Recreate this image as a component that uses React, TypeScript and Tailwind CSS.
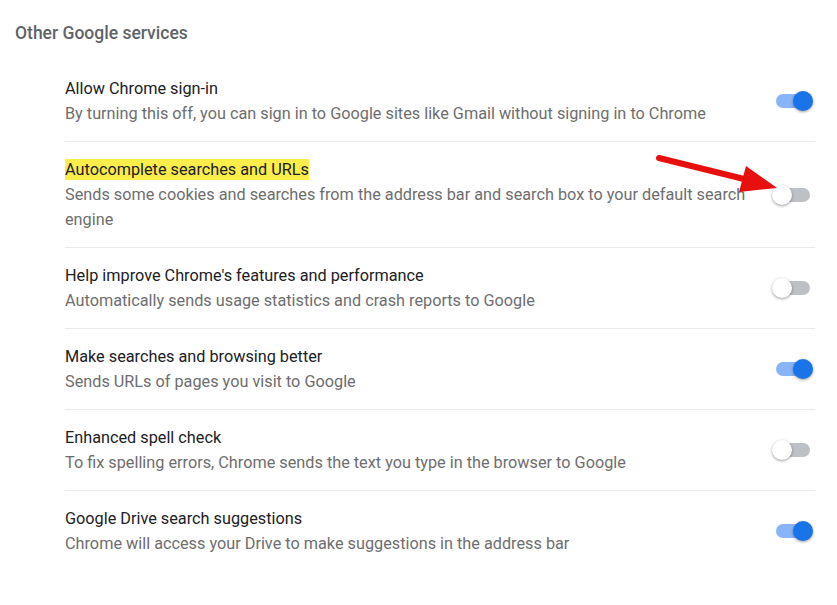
const rows = [
  {
    title: 'Allow Chrome sign-in',
    desc: 'By turning this off, you can sign in to Google sites like Gmail without signing in to Chrome',
    on: true,
  },
  {
    title: 'Autocomplete searches and URLs',
    desc: 'Sends some cookies and searches from the address bar and search box to your default search engine',
    on: false,
    highlight: true,
  },
  {
    title: "Help improve Chrome's features and performance",
    desc: 'Automatically sends usage statistics and crash reports to Google',
    on: false,
  },
  {
    title: 'Make searches and browsing better',
    desc: 'Sends URLs of pages you visit to Google',
    on: true,
  },
  {
    title: 'Enhanced spell check',
    desc: 'To fix spelling errors, Chrome sends the text you type in the browser to Google',
    on: false,
  },
  {
    title: 'Google Drive search suggestions',
    desc: 'Chrome will access your Drive to make suggestions in the address bar',
    on: true,
  },
]

function Toggle({ on }: { on: boolean }) {
  return (
    <div className="relative w-[36px] h-[20px] shrink-0">
      <div
        className={
          'absolute left-[1px] right-[1px] top-[3px] h-[14px] rounded-full ' +
          (on ? 'bg-[#8ab4f8]' : 'bg-[#bdc1c6]')
        }
      />
      <div
        className={
          'absolute top-0 w-[20px] h-[20px] rounded-full shadow-[0_1px_3px_rgba(0,0,0,0.4)] ' +
          (on ? 'right-[-2px] bg-[#1a73e8]' : 'left-[-3px] bg-white')
        }
      />
    </div>
  )
}

export default function App() {
  return (
    <div className="relative min-h-screen bg-white font-['Roboto',sans-serif] text-[16.25px]">
      <h2 className="pl-[15px] pt-[20px] text-[17.5px] font-medium text-[#5f6368] leading-[26px]">
        Other Google services
      </h2>

      <div className="ml-[65px] mr-[22px] mt-[15px]">
        {rows.map((r, i) => (
          <div
            key={r.title}
            className={
              'flex items-center gap-6 py-[15px] ' +
              (i < rows.length - 1 ? 'border-b border-[#e8eaed]' : '')
            }
          >
            <div className="flex-1 leading-[25px]">
              <div className="text-[#202124]">
                {r.highlight ? (
                  <span className="bg-[#fbed4a] py-[1px]">{r.title}</span>
                ) : (
                  r.title
                )}
              </div>
              <div className="text-[#6e6e6e]">{r.desc}</div>
            </div>
            <div className="pr-[4px]">
              <Toggle on={r.on} />
            </div>
          </div>
        ))}
      </div>

      {/* red annotation arrow */}
      <svg
        className="absolute left-0 top-0 pointer-events-none"
        width="837"
        height="605"
        viewBox="0 0 837 605"
      >
        <line x1="659" y1="158" x2="748" y2="180" stroke="#e8100f" strokeWidth="6" strokeLinecap="round" />
        <polygon points="777,188 739,192 746,166" fill="#e8100f" />
      </svg>
    </div>
  )
}
